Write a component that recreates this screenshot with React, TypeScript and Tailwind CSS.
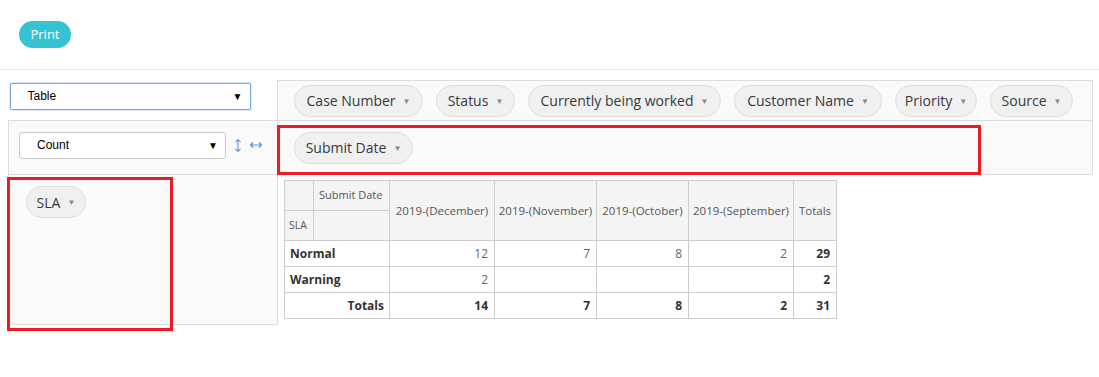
const font = { fontFamily: '"Open Sans", "Noto Sans", sans-serif' };

function Pill({ label, w }: { label: string; w: string }) {
  return (
    <span
      className={`${w} inline-flex h-[32px] shrink-0 items-center justify-center gap-[7px] rounded-full border border-[#dedede] bg-[#f0f0f0] text-[14px] text-[#343a40]`}
    >
      <span>{label}</span>
      <span className="text-[8px] text-[#888]">▼</span>
    </span>
  );
}

function Select({ label, w, focused }: { label: string; w: string; focused?: boolean }) {
  return (
    <div
      className={`${w} flex h-[27px] items-center justify-between bg-white pl-[17px] pr-[7px] text-[12px] text-black ${
        focused ? "rounded-[2px] border border-[#7ea6e6] shadow-[0_0_0_1px_#dce8fa]" : "rounded-[3px] border border-[#c9c9c9]"
      }`}
      style={{ fontFamily: '"Liberation Sans", Arial, sans-serif' }}
    >
      <span>{label}</span>
      <span className="text-[10px]">▼</span>
    </div>
  );
}

const months = [
  { label: "2019-(December)", w: "w-[105px]", normal: "12", warning: "2", total: "14" },
  { label: "2019-(November)", w: "w-[102px]", normal: "7", warning: "", total: "7" },
  { label: "2019-(October)", w: "w-[92px]", normal: "8", warning: "", total: "8" },
  { label: "2019-(September)", w: "w-[105px]", normal: "2", warning: "", total: "2" },
];

function PivotTable() {
  const th = "border border-[#cdcdcd] bg-[#f4f4f4] font-normal text-[#555]";
  const td = "border border-[#cdcdcd] px-[6px] text-right text-[12px]";
  return (
    <table className="w-[552px] table-fixed border-collapse text-[12px]" style={font}>
      <colgroup>
        <col className="w-[29px]" />
        <col className="w-[76px]" />
        {months.map((m) => (
          <col key={m.label} className={m.w} />
        ))}
        <col className="w-[43px]" />
      </colgroup>
      <thead>
        <tr className="h-[30px]">
          <th className={th}></th>
          <th className={`${th} px-[5px] text-left text-[11px]`}>Submit Date</th>
          {months.map((m) => (
            <th key={m.label} rowSpan={2} className={`${th} whitespace-nowrap px-0 text-[11.5px]`}>
              {m.label}
            </th>
          ))}
          <th rowSpan={2} className={`${th} px-0 text-[11.5px]`}>Totals</th>
        </tr>
        <tr className="h-[30px]">
          <th className={`${th} px-[4px] text-left text-[10.5px]`}>SLA</th>
          <th className={th}></th>
        </tr>
      </thead>
      <tbody>
        <tr className="h-[26px]">
          <th colSpan={2} className="border border-[#cdcdcd] px-[5px] text-left font-bold text-[#333]">Normal</th>
          {months.map((m) => (
            <td key={m.label} className={`${td} text-[#666]`}>{m.normal}</td>
          ))}
          <td className={`${td} font-bold text-[#333]`}>29</td>
        </tr>
        <tr className="h-[26px]">
          <th colSpan={2} className="border border-[#cdcdcd] px-[5px] text-left font-bold text-[#333]">Warning</th>
          {months.map((m) => (
            <td key={m.label} className={`${td} text-[#666]`}>{m.warning}</td>
          ))}
          <td className={`${td} font-bold text-[#333]`}>2</td>
        </tr>
        <tr className="h-[26px]">
          <th colSpan={2} className="border border-[#cdcdcd] px-[5px] text-right font-bold text-[#333]">Totals</th>
          {months.map((m) => (
            <td key={m.label} className={`${td} font-bold text-[#333]`}>{m.total}</td>
          ))}
          <td className={`${td} font-bold text-[#333]`}>31</td>
        </tr>
      </tbody>
    </table>
  );
}

function VArrow() {
  return (
    <svg width="8" height="15" viewBox="0 0 8 15" fill="none" stroke="#6f9bd6" strokeWidth="1.2">
      <path d="M4 1.5v12M1.5 4L4 1.5 6.5 4M1.5 11L4 13.5 6.5 11" />
    </svg>
  );
}

function HArrow() {
  return (
    <svg width="14" height="8" viewBox="0 0 14 8" fill="none" stroke="#5b8fd6" strokeWidth="1.2">
      <path d="M1.5 4h11M4 1.5L1.5 4 4 6.5M10 1.5L12.5 4 10 6.5" />
    </svg>
  );
}

export default function App() {
  return (
    <div className="h-[377px] w-[1099px] overflow-hidden bg-white" style={font}>
      {/* toolbar */}
      <div className="h-[70px] border-b border-[#ececec] px-[19px] pt-[21px]">
        <button className="flex h-[27px] w-[52px] items-center justify-center rounded-full bg-[#33c3d2] text-[13px] font-medium text-white">
          Print
        </button>
      </div>

      {/* pivot ui */}
      <div className="relative pl-[8px] pt-[10px]">
        <table className="border-collapse">
          <tbody>
            <tr className="h-[40px]">
              <td className="w-[269px] p-0 pl-[1px] align-top">
                <div className="pt-[2px]">
                  <Select label="Table" w="w-[241px]" focused />
                </div>
              </td>
              <td className="w-[815px] border border-[#dcdcdc] bg-[#fafafa] p-0 pl-[16px]">
                <div className="flex gap-[13px]">
                  <Pill label="Case Number" w="w-[129px]" />
                  <Pill label="Status" w="w-[79px]" />
                  <Pill label="Currently being worked" w="w-[193px]" />
                  <Pill label="Customer Name" w="w-[148px]" />
                  <Pill label="Priority" w="w-[82px]" />
                  <Pill label="Source" w="w-[83px]" />
                </div>
              </td>
            </tr>
            <tr className="h-[54px]">
              <td className="border border-[#dcdcdc] bg-[#fafafa] p-0 pb-[5px] pl-[10px]">
                <div className="flex items-center">
                  <Select label="Count" w="w-[207px]" />
                  <span className="ml-[8px] flex">
                    <VArrow />
                  </span>
                  <span className="ml-[7px] flex">
                    <HArrow />
                  </span>
                </div>
              </td>
              <td className="border border-[#dcdcdc] bg-[#fafafa] p-0 pl-[16px]">
                <Pill label="Submit Date" w="w-[119px]" />
              </td>
            </tr>
            <tr className="h-[150px]">
              <td className="border border-[#dcdcdc] bg-[#fafafa] p-0 pl-[17px] pt-[11px] align-top">
                <Pill label="SLA" w="w-[60px]" />
              </td>
              <td className="p-0 pl-[6px] pt-[5px] align-top">
                <PivotTable />
              </td>
            </tr>
          </tbody>
        </table>

        {/* annotation boxes */}
        <div className="pointer-events-none absolute left-[277px] top-[55px] h-[50px] w-[704px] border-[3px] border-[#ec1c24]" />
        <div className="pointer-events-none absolute left-[7px] top-[107px] h-[154px] w-[166px] border-[3px] border-[#ec1c24]" />
      </div>
    </div>
  );
}
